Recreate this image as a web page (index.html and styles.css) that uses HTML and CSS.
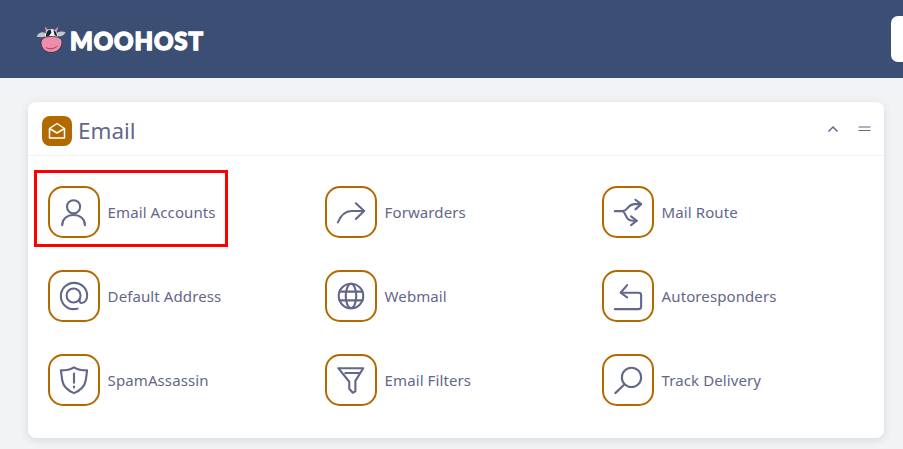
FILE: index.html
```html
<!DOCTYPE html>
<html lang="en">
<head>
  <meta charset="utf-8">
  <title>Email - Moohost</title>
  <link rel="stylesheet" href="styles.css">
</head>
<body>
<header class="topbar">
  <div class="logo">
    <svg class="cow" viewBox="0 0 30 27" width="30" height="27">
      <path d="M10 8 L9 0.500 L13 4.500 Z M20 8 L22.500 0.500 L18 4.500 Z" fill="#e88aa8"/>
      <path d="M9.500 7 C6 5.500 3 6.500 0.500 10.500 C4 11.500 7.500 11.500 10 10 Z" fill="#c3c7cf"/>
      <path d="M20.500 7 C24 5 27 5 29.800 6.500 C27 10 24 11 20 10 Z" fill="#c3c7cf"/>
      <path d="M9 12 C9 6 11 3 15 3 C19 3 21.500 6 21.500 12 Z" fill="#f4f4f6"/>
      <path d="M10 11 C10 6 11.500 4 14.500 3.500 L15.500 6.500 L13 10 Z M17.500 4 C20 5 21 8 21 10.500 L18.500 9 Z" fill="#1c2233"/>
      <path d="M5 16.500 C5 12.500 9 10.500 15 10.500 C21 10.500 26 11.500 26 16 C26 22 21.500 26.500 15 26.500 C9 26.500 5 22 5 16.500 Z" fill="#f08cab" stroke="#2a2c3c" stroke-width="0.800"/>
      <path d="M10 21.500 C13 23.500 18 23 21.500 20" fill="none" stroke="#8d3b55" stroke-width="0.900"/>
    </svg>
    <span class="logo-text">MOOHOST</span>
  </div>
  <div class="search"></div>
</header>

<main class="content">
  <section class="card">
    <div class="card-head">
      <span class="head-icon">
        <svg viewBox="0 0 20 20" width="20" height="20" fill="none" stroke="#fff" stroke-width="1.500" stroke-linejoin="round">
          <path d="M2.500 7.500 L10 2.500 L17.500 7.500 V17 H2.500 Z"/>
          <path d="M2.500 7.500 L10 12 L17.500 7.500"/>
        </svg>
      </span>
      <h2 class="card-title">Email</h2>
      <div class="card-tools">
        <svg viewBox="0 0 12 8" width="12" height="8" fill="none" stroke="#63678a" stroke-width="1.500"><path d="M1.500 6.500 L6 2 L10.500 6.500"/></svg>
        <svg viewBox="0 0 13 6" width="13" height="6" fill="none" stroke="#63678a" stroke-width="1.200"><path d="M0.500 1 H12.500 M0.500 4.500 H12.500"/></svg>
      </div>
    </div>

    <div class="tools-grid">
      <a class="tool tool-selected">
        <span class="tool-icon"><svg viewBox="0 0 32 32"><circle cx="15.500" cy="10" r="7.500"/><path d="M2.500 31 C2.500 24 8 19.500 15.500 19.500 C23 19.500 28.500 24 28.500 31"/></svg></span>
        <span>Email Accounts</span>
      </a>
      <a class="tool">
        <span class="tool-icon"><svg viewBox="0 0 32 32"><path d="M1 28 C4 20 9 15 17 14.800 H31"/><path d="M21.500 6 L31 14.800 L21.500 24"/></svg></span>
        <span>Forwarders</span>
      </a>
      <a class="tool">
        <span class="tool-icon"><svg viewBox="0 0 32 32"><path d="M1 15 H10 C16 15 15 7 24 7 H31"/><path d="M24.500 2 L31 7 L24.500 13"/><path d="M11 16 C14 18 13 26 21 26 H26"/><path d="M19.500 21 L26 26 L19.500 31"/></svg></span>
        <span>Mail Route</span>
      </a>
      <a class="tool">
        <span class="tool-icon"><svg viewBox="0 0 32 32"><path d="M20 30.500 C17.500 31 16.500 31 15.500 31 C7 31 1 24 1 16 C1 8 7.500 1 16 1 C24.500 1 31 7.500 31 15.500 C31 20 28.500 24 25 24 C22.500 24 22 22 22.500 19"/><circle cx="15.500" cy="15.500" r="8"/></svg></span>
        <span>Default Address</span>
      </a>
      <a class="tool">
        <span class="tool-icon"><svg viewBox="0 0 32 32"><circle cx="16" cy="16" r="14"/><ellipse cx="16" cy="16" rx="6" ry="14"/><path d="M3 11 H29 M3 21 H29"/></svg></span>
        <span>Webmail</span>
      </a>
      <a class="tool">
        <span class="tool-icon"><svg viewBox="0 0 32 32"><path d="M8 12.300 H28 C30 12.300 31 13.500 31 15 V28 C31 30 30 31 28 31 H1"/><path d="M15 3.500 L7.600 12.300 L15 17.500"/></svg></span>
        <span>Autoresponders</span>
      </a>
      <a class="tool">
        <span class="tool-icon"><svg viewBox="0 0 32 32"><path d="M16 1.500 C20 4 25 5 31 5 L29.500 16 C28.500 23 23 28 16 31 C9 28 3.500 23 2.500 16 L1 5 C7 5 12 4 16 1.500 Z"/><path d="M16 8.500 V19"/><path d="M16 23.500 V24.500"/></svg></span>
        <span>SpamAssassin</span>
      </a>
      <a class="tool">
        <span class="tool-icon"><svg viewBox="0 0 32 32"><path d="M1.500 2.500 H30 L21 17 V29 L18 30.500 L14 26 V18 Z"/><path d="M9.500 8 H25.500"/></svg></span>
        <span>Email Filters</span>
      </a>
      <a class="tool">
        <span class="tool-icon"><svg viewBox="0 0 32 32"><circle cx="20" cy="13" r="11"/><path d="M11.500 21.500 L1.500 31"/></svg></span>
        <span>Track Delivery</span>
      </a>
    </div>
    <div class="highlight"></div>
  </section>
</main>
</body>
</html>
```

FILE: styles.css
```css
* {
    box-sizing: border-box;
}

body {
    margin: 0;
    height: 449px;
    overflow: hidden;
    background-color: #f2f3f5;
    color: #63678a;
    font-family: "Noto Sans", "Open Sans", sans-serif;
}

.topbar {
    height: 78px;
    background-color: #3b4e74;
    padding-left: 36px;
    display: flex;
    justify-content: space-between;
    align-items: center;
    overflow: hidden;
}

.logo {
    display: flex;
    align-items: center;
    gap: 4px;
}

.logo-text {
    color: #fff;
    font-family: "Lato", sans-serif;
    font-size: 24px;
    font-weight: 900;
    letter-spacing: 0.9px;
    -webkit-text-stroke: 1.4px #fff;
    line-height: 28px;
    margin-top: 4px;
}

.search {
    width: 30px;
    height: 46px;
    margin-right: -18px;
    background-color: #fff;
    border-radius: 7px;
}

.content {
    padding: 24px 19px 0 28px;
}

.card {
    position: relative;
    height: 336px;
    background-color: #fff;
    border-radius: 8px;
    box-shadow: 0 2px 8px rgba(60, 70, 100, 0.14);
}

.card-head {
    height: 54px;
    padding: 4px 13px 0 14px;
    border-bottom: 1px solid #f0f1f3;
    display: flex;
    align-items: center;
    gap: 6px;
}

.head-icon {
    width: 30px;
    height: 30px;
    border-radius: 8px;
    background-color: #b26a00;
    display: flex;
    justify-content: center;
    align-items: center;
}

.card-title {
    margin: 0;
    font-size: 22.4px;
    font-weight: 400;
    line-height: 30px;
}

.card-tools {
    margin-left: auto;
    margin-top: -4px;
    display: flex;
    align-items: center;
    gap: 19px;
}

.tools-grid {
    padding: 30px 0 0 20px;
    display: grid;
    grid-template-columns: repeat(3, 277px);
    grid-auto-rows: 52px;
    row-gap: 32px;
}

.tool {
    display: flex;
    align-items: center;
    gap: 7.6px;
    font-size: 15px;
    letter-spacing: 0.1px;
}

.tool-icon {
    width: 52px;
    height: 52px;
    border: 2px solid #b26a00;
    border-radius: 15px;
    display: flex;
    justify-content: center;
    align-items: center;
}

.tool-icon svg {
    width: 28px;
    height: 28px;
    overflow: visible;
    fill: none;
    stroke: #63678a;
    stroke-width: 2.4;
    stroke-linecap: round;
    stroke-linejoin: round;
}

.highlight {
    position: absolute;
    top: 68px;
    left: 6px;
    width: 194px;
    height: 77px;
    border: 3px solid #f00;
}
```
